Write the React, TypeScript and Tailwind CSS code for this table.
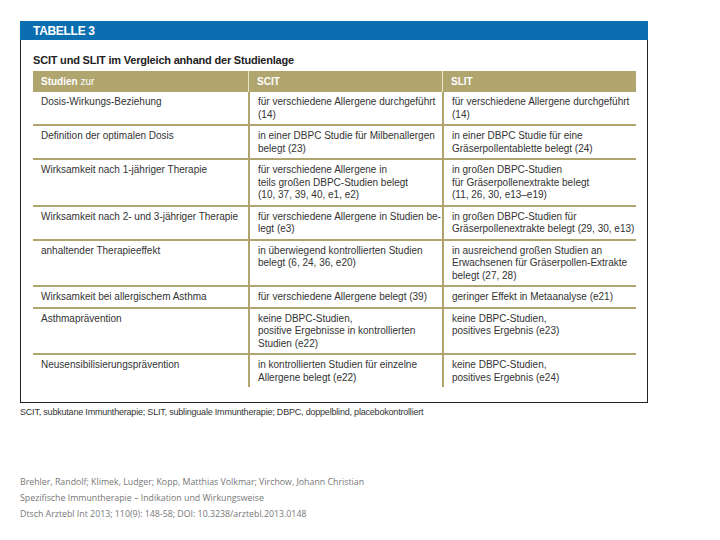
const rows: [string, string[], string[]][] = [
  ["Dosis-Wirkungs-Beziehung", ["für verschiedene Allergene durchgeführt", "(14)"], ["für verschiedene Allergene durchgeführt", "(14)"]],
  ["Definition der optimalen Dosis", ["in einer DBPC Studie für Milbenallergen", "belegt (23)"], ["in einer DBPC Studie für eine", "Gräserpollentablette belegt (24)"]],
  ["Wirksamkeit nach 1-jähriger Therapie", ["für verschiedene Allergene in", "teils großen DBPC-Studien belegt", "(10, 37, 39, 40, e1, e2)"], ["in großen DBPC-Studien", "für Gräserpollenextrakte belegt", "(11, 26, 30, e13–e19)"]],
  ["Wirksamkeit nach 2- und 3-jähriger Therapie", ["für verschiedene Allergene in Studien be-", "legt (e3)"], ["in großen DBPC-Studien für", "Gräserpollenextrakte belegt (29, 30, e13)"]],
  ["anhaltender Therapieeffekt", ["in überwiegend kontrollierten Studien", "belegt (6, 24, 36, e20)"], ["in ausreichend großen Studien an", "Erwachsenen für Gräserpollen-Extrakte", "belegt (27, 28)"]],
  ["Wirksamkeit bei allergischem Asthma", ["für verschiedene Allergene belegt (39)"], ["geringer Effekt in Metaanalyse (e21)"]],
  ["Asthmaprävention", ["keine DBPC-Studien,", "positive Ergebnisse in kontrollierten", "Studien (e22)"], ["keine DBPC-Studien,", "positives Ergebnis (e23)"]],
  ["Neusensibilisierungsprävention", ["in kontrollierten Studien für einzelne", "Allergene belegt (e22)"], ["keine DBPC-Studien,", "positives Ergebnis (e24)"]],
];

function Lines({ lines }: { lines: string[] }) {
  return (
    <>
      {lines.map((l, i) => (
        <div key={i}>{l}</div>
      ))}
    </>
  );
}

export default function App() {
  return (
    <div className="w-[720px] h-[540px] bg-white font-['Liberation_Sans',Arial,sans-serif] text-[#333]">
      <div className="pt-[21px] pl-5">
        <div className="w-[628px] h-[382px] border border-[#222] border-t-0 flex flex-col">
          <div className="h-[19px] bg-[#0a6eb0] -mx-px px-[13px] text-white font-bold text-[12px] leading-[20px] tracking-[-0.3px]">
            TABELLE 3
          </div>
          <div className="px-3 pt-[13px] text-[11px] leading-[14px] font-bold text-[#222] tracking-[-0.2px]">
            SCIT und SLIT im Vergleich anhand der Studienlage
          </div>
          <div className="ml-3 mt-[4px] w-[603px] text-[10px] leading-[12.5px] whitespace-nowrap">
            <div className="grid grid-cols-[215px_194px_194px] h-[21px] bg-[#b0a46f] text-white font-bold leading-[21px]">
              <div className="pl-2">Studien <span className="font-normal">zur</span></div>
              <div className="pl-2 border-l border-[#e8e2c8]">SCIT</div>
              <div className="pl-2 border-l border-[#e8e2c8]">SLIT</div>
            </div>
            {rows.map(([a, b, c], i) => (
              <div
                key={i}
                className={`grid grid-cols-[215px_194px_194px] ${i < rows.length - 1 ? "border-b-2 border-[#b0a46f]" : ""}`}
              >
                <div className="pl-2 pt-[4px] pb-[3px]">{a}</div>
                <div className="pl-2 pt-[4px] pb-[3px] border-l-2 border-[#b0a46f]">
                  <Lines lines={b} />
                </div>
                <div className="pl-2 pt-[4px] pb-[3px] border-l-2 border-[#b0a46f]">
                  <Lines lines={c} />
                </div>
              </div>
            ))}
          </div>
        </div>
        <div className="mt-[4px] text-[9px] leading-[11px] text-[#333] tracking-[-0.2px]">
          SCIT, subkutane Immuntherapie; SLIT, sublinguale Immuntherapie; DBPC, doppelblind, placebokontrolliert
        </div>
      </div>
      <div className="pl-5 mt-[56px] text-[8.8px] leading-[16px] text-[#777] font-['Open_Sans',sans-serif]">
        <div>Brehler, Randolf; Klimek, Ludger; Kopp, Matthias Volkmar; Virchow, Johann Christian</div>
        <div>Spezifische Immuntherapie – Indikation und Wirkungsweise</div>
        <div>Dtsch Arztebl Int 2013; 110(9): 148-58; DOI: 10.3238/arztebl.2013.0148</div>
      </div>
    </div>
  );
}
